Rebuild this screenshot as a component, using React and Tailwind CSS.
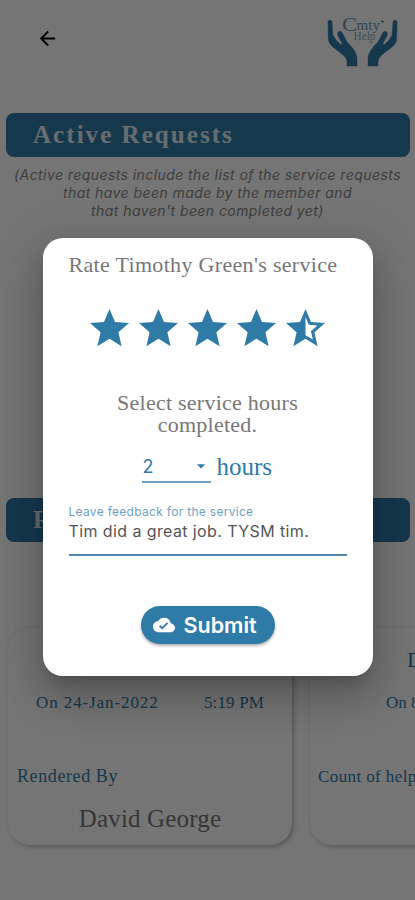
import { MdCloudDone, MdStar, MdStarHalf, MdArrowDropDown, MdArrowBack } from 'react-icons/md'

const SERIF = "font-['Liberation_Serif',serif]"

function Hand() {
  return (
    <path d="M2 6C1.8 3.8 5.6 3.6 6 6L6.8 19L10.5 24.5L15 29C16.4 28.8 16 27 15 25.2L11.8 19.5C11 15.5 14 13.8 16 16.5L20 24C22 28.5 31 34 31 43V50H21V45C20 38 6 33 3 26C1.8 22 2.2 12 2 6Z" />
  )
}

function Logo() {
  return (
    <svg width="72" height="52" viewBox="0 0 72 52" fill="#2f7ba8" stroke="none" aria-label="Cmty Help">
      <g stroke="#2f7ba8" strokeWidth=".5">
        <Hand />
        <g transform="matrix(-1 0 0 1 73 0)">
          <Hand />
        </g>
      </g>
      <text x="16" y="15" fontSize="18" textLength="15" lengthAdjust="spacingAndGlyphs" opacity=".75" className={SERIF}>C</text>
      <text x="30.5" y="13.5" fontSize="14" textLength="23.5" lengthAdjust="spacingAndGlyphs" opacity=".75" className={SERIF}>mty</text>
      <text x="27.5" y="23.5" fontSize="12" textLength="22" lengthAdjust="spacingAndGlyphs" opacity=".6" className={SERIF}>Help</text>
      <circle cx="56.5" cy="5.5" r="1.1" fill="#444" />
    </svg>
  )
}

function Banner({ children }) {
  return (
    <div className={`ml-[6px] mr-[5px] flex h-[44px] shrink-0 items-center rounded-[8px] bg-[#2f7ba8] pb-px pl-[27px] text-[25px] font-bold tracking-[2.05px] text-white/85 ${SERIF}`}>
      {children}
    </div>
  )
}

function Card({ children }) {
  return (
    <div className="h-[217px] w-[284px] shrink-0 rounded-[22px] bg-white shadow-[2px_2px_4px_rgba(0,0,0,0.25),-2px_-2px_4px_rgba(0,0,0,0.03)]">
      {children}
    </div>
  )
}

function RateDialog() {
  return (
    <div className="mt-[238px] flex h-[438px] w-[330px] flex-col rounded-[20px] bg-white px-[26px] shadow-[0_11px_15px_-7px_rgba(0,0,0,0.2),0_24px_38px_3px_rgba(0,0,0,0.14),0_9px_46px_8px_rgba(0,0,0,0.12)]">
      <h2 className={`mt-[14px] h-[26px] whitespace-nowrap text-[22px] leading-[26px] tracking-[0.32px] text-[#777] ${SERIF}`}>
        Rate Timothy Green's service
      </h2>

      <div className="mt-[27px] flex justify-center gap-[2px] text-[#2f7ba8]">
        <MdStar size={47} />
        <MdStar size={47} />
        <MdStar size={47} />
        <MdStar size={47} />
        <MdStarHalf size={47} />
      </div>

      <p className={`mt-[40px] text-center text-[22px] leading-[22px] tracking-[0.25px] text-[#777] ${SERIF}`}>
        Select service hours
        <br />
        completed.
      </p>

      <div className="mt-[17px] flex h-[30px] pl-[73px] text-[#2f7ba8]">
        <div className="flex w-[69px] items-center justify-between border-b-2 border-[#6f9fc0] font-['Inter',sans-serif] text-[18px]">
          <span className="-mt-px pl-px">2</span>
          <MdArrowDropDown size={20} className="-mt-[2px]" />
        </div>
        <span className={`ml-[6px] text-[25px] leading-[28px] ${SERIF}`}>hours</span>
      </div>

      <div className="mt-[21px] h-[52px] border-b-2 border-[#5288b2] font-['Inter',sans-serif]">
        <div className="h-[16px] whitespace-nowrap text-[12px] leading-[16px] tracking-[0.3px] text-[#6f9fc5]">
          Leave feedback for the service
        </div>
        <div className="whitespace-nowrap text-[16px] leading-[22px] tracking-[0.4px] text-[#555]">
          Tim did a great job. TYSM tim.
        </div>
      </div>

      <button className="mx-auto mt-[50px] flex h-[38px] w-[134px] items-center rounded-full bg-[#2f7ba8] pl-[12px] font-['Inter',sans-serif] text-[21.5px] font-semibold text-white shadow-[0_2px_3px_rgba(0,0,0,0.3)]">
        <MdCloudDone size={22} />
        <span className="ml-[9px]">Submit</span>
      </button>
    </div>
  )
}

export default function App() {
  return (
    <div className="relative h-[900px] w-full overflow-hidden bg-white">
      <div className="flex h-full flex-col">
        <header className="flex h-[113px] shrink-0 items-start justify-between pl-[36px] pr-[17px]">
          <MdArrowBack size={23} className="mt-[27px] text-black" />
          <div className="mt-[16px]">
            <Logo />
          </div>
        </header>

        <Banner>Active Requests</Banner>
        <p className="mt-[9px] h-[332px] shrink-0 whitespace-nowrap text-center font-['Inter',sans-serif] text-[14px] italic leading-[18px] tracking-[0.42px] text-[#888]">
          (Active requests include the list of the service requests
          <br />
          that have been made by the member and
          <br />
          that haven't been completed yet)
        </p>

        <Banner>Rendered Services</Banner>
        <div className={`mt-[86px] flex gap-[18px] pl-[8px] text-[#2f7ba8] ${SERIF}`}>
          <Card>
            <div className="mt-[64px] flex h-[22px] justify-between pl-[28px] pr-[28px] text-[17px] leading-[22px]">
              <span className="tracking-[0.9px]">On 24-Jan-2022</span>
              <span className="tracking-[0.15px]">5:19 PM</span>
            </div>
            <div className="mt-[51px] pl-[9px] text-[18px] leading-[22px] tracking-[0.6px]">Rendered By</div>
            <div className="mt-[17px] text-center text-[25px] leading-[30px] tracking-[0.15px] text-[#777]">David George</div>
          </Card>
          <Card>
            <div className="mt-[19px] h-[26px] pl-[97px] text-[22px] leading-[26px]">David George</div>
            <div className="mt-[19px] pl-[76px] text-[17px] leading-[22px]">On 8-Jan-2022</div>
            <div className="mt-[52px] pl-[8px] text-[17px] leading-[22px] tracking-[0.4px]">Count of helps</div>
          </Card>
        </div>
      </div>

      <div className="absolute inset-0 flex items-start justify-center bg-black/54">
        <RateDialog />
      </div>
    </div>
  )
}
